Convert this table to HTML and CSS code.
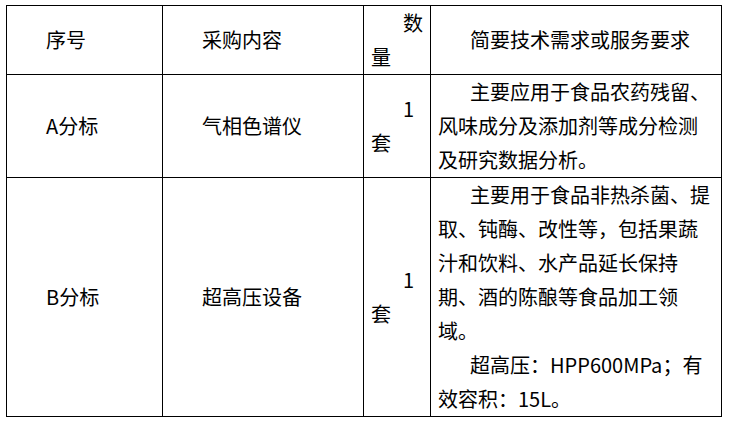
FILE: index.html
```html
<!DOCTYPE html>
<html lang="zh-CN">
<head>
<meta charset="utf-8">
<title>采购内容</title>
<link rel="stylesheet" href="styles.css">
</head>
<body>
<table class="spec">
  <colgroup>
    <col class="c-no">
    <col class="c-item">
    <col class="c-qty">
    <col class="c-desc">
  </colgroup>
  <tr class="head">
    <td><p>序号</p></td>
    <td><p>采购内容</p></td>
    <td class="qty"><p>数量</p></td>
    <td class="desc"><p>简要技术需求或服务要求</p></td>
  </tr>
  <tr class="row-a">
    <td><p>A分标</p></td>
    <td><p>气相色谱仪</p></td>
    <td class="qty"><p>1 套</p></td>
    <td class="desc"><p>主要应用于食品农药残留、风味成分及添加剂等成分检测及研究数据分析。</p></td>
  </tr>
  <tr class="row-b">
    <td><p>B分标</p></td>
    <td><p>超高压设备</p></td>
    <td class="qty"><p>1 套</p></td>
    <td class="desc"><p>主要用于食品非热杀菌、提取、钝酶、改性等，包括果蔬汁和饮料、水产品延长保持期、酒的陈酿等食品加工领域。</p><p>超高压：HPP600MPa；有效容积：15L。</p></td>
  </tr>
</table>
</body>
</html>
```
FILE: styles.css
```css
html, body {
  margin: 0;
  background: #ffffff;
}
body {
  padding: 5px 0 0 6px;
  font-family: "Noto Sans CJK SC", "Noto Sans", sans-serif;
  font-size: 20px;
  color: #000000;
}
.spec {
  border-collapse: collapse;
  table-layout: fixed;
  width: 715px;
}
.c-no { width: 156px; }
.c-item { width: 201px; }
.c-qty { width: 67px; }
.c-desc { width: 291px; }
.spec td {
  border: 1px solid #000000;
  padding: 0 12px 0 7px;
  vertical-align: middle;
  line-height: 34px;
}
.spec td.qty {
  padding-right: 2px;
}
.spec td.desc {
  padding-right: 6px;
}
.spec p {
  margin: 0;
  text-indent: 32px;
}
```
